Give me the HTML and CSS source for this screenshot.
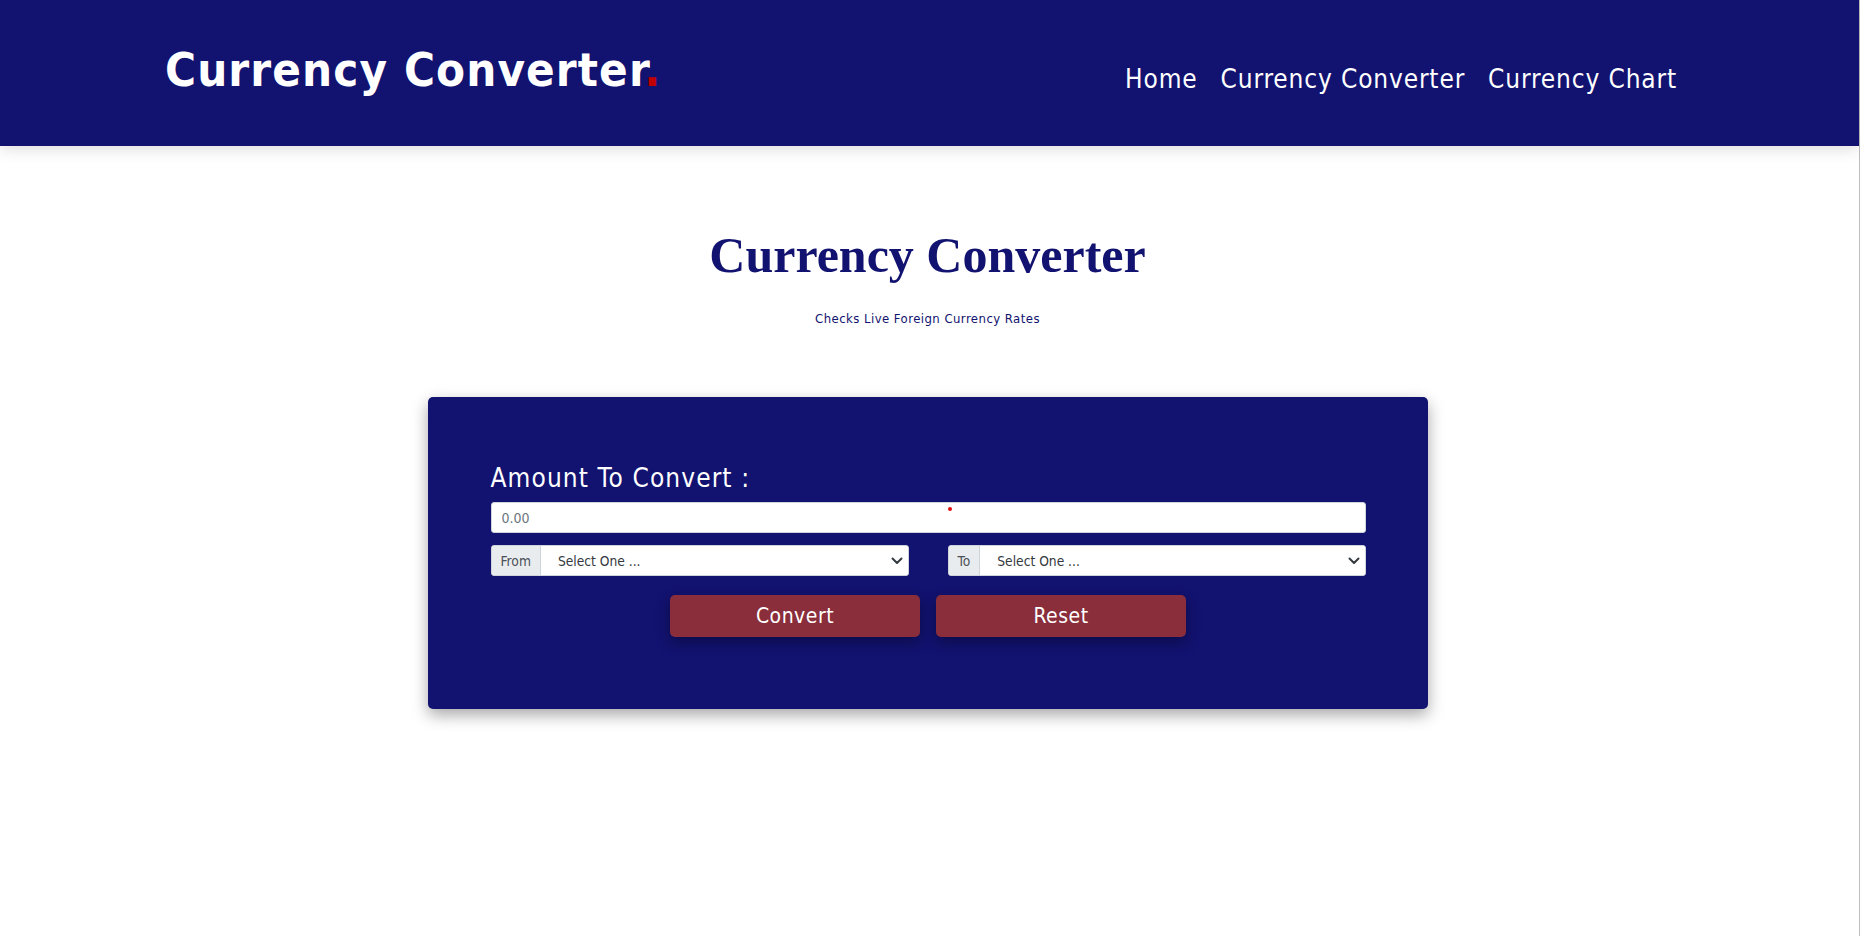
FILE: index.html
```html
<!DOCTYPE html>
<html lang="en">
<head>
<meta charset="utf-8">
<title>Currency Converter</title>
<link rel="stylesheet" href="styles.css">
</head>
<body>
<div class="page">
  <header class="site-header">
    <div class="brand">Currency Converter<span class="brand-dot">.</span></div>
    <nav class="nav">
      <a href="#" class="nav-link">Home</a>
      <a href="#" class="nav-link">Currency Converter</a>
      <a href="#" class="nav-link">Currency Chart</a>
    </nav>
  </header>

  <main class="main">
    <h1 class="title">Currency Converter</h1>
    <p class="subtitle">Checks Live Foreign Currency Rates</p>

    <section class="card">
      <label class="amount-label" for="amount">Amount To Convert :</label>
      <div class="amount-wrap">
        <input id="amount" class="amount-input" type="text" placeholder="0.00">
        <span class="red-dot"></span>
      </div>
      <div class="select-row">
        <div class="input-group">
          <span class="addon">From</span>
          <div class="select-wrap">
            <select class="select"><option>Select One ...</option></select>
            <svg class="chevron" width="12" height="8" viewBox="0 0 12 8"><path d="M1.5 1.5 L6 6 L10.5 1.5" fill="none" stroke="#343a40" stroke-width="2" stroke-linecap="round" stroke-linejoin="round"/></svg>
          </div>
        </div>
        <div class="input-group">
          <span class="addon">To</span>
          <div class="select-wrap">
            <select class="select"><option>Select One ...</option></select>
            <svg class="chevron" width="12" height="8" viewBox="0 0 12 8"><path d="M1.5 1.5 L6 6 L10.5 1.5" fill="none" stroke="#343a40" stroke-width="2" stroke-linecap="round" stroke-linejoin="round"/></svg>
          </div>
        </div>
      </div>
      <div class="button-row">
        <button class="btn" type="button">Convert</button>
        <button class="btn" type="button">Reset</button>
      </div>
    </section>
  </main>
</div>
</body>
</html>
```

FILE: styles.css
```css
* { box-sizing: border-box; }

html, body {
  margin: 0;
  padding: 0;
  background: #ffffff;
}

body {
  font-family: "DejaVu Sans Condensed", "DejaVu Sans", sans-serif;
  overflow: hidden;
}

.page {
  width: 1860px;
  min-height: 936px;
  border-right: 1px solid #bdbdbd;
}

.site-header {
  height: 146px;
  background: #121270;
  display: flex;
  justify-content: space-between;
  align-items: flex-start;
  padding: 0 182px 0 165px;
  box-shadow: 0 4px 14px rgba(0, 0, 0, 0.12);
  position: relative;
}

.brand {
  color: #ffffff;
  font-weight: bold;
  font-size: 47px;
  letter-spacing: 1.1px;
  line-height: 56px;
  padding-top: 42px;
}

.brand-dot { color: #c00000; }

.nav {
  display: flex;
  gap: 23px;
  padding-top: 63px;
}

.nav-link {
  color: #ffffff;
  text-decoration: none;
  font-size: 26px;
  letter-spacing: 0.85px;
  line-height: 32px;
}

.main {
  display: flex;
  flex-direction: column;
  align-items: center;
  padding-right: 4px;
}

.title {
  margin: 79px 0 0;
  font-family: "Liberation Serif", "Times New Roman", serif;
  font-weight: bold;
  font-size: 50px;
  line-height: 60px;
  color: #121270;
}

.subtitle {
  margin: 26px 0 0;
  font-size: 13px;
  letter-spacing: 0.45px;
  line-height: 16px;
  color: #121270;
}

.card {
  margin-top: 70px;
  width: 1000px;
  height: 312px;
  background: #121270;
  border-radius: 5px;
  padding: 64px 62px 0 63px;
  box-shadow: 0 6px 16px rgba(0, 0, 0, 0.35);
  display: flex;
  flex-direction: column;
}

.amount-label {
  color: #ffffff;
  font-size: 26px;
  letter-spacing: 1.1px;
  line-height: 32px;
  margin-top: 1px;
  margin-bottom: 8px;
}

.amount-wrap {
  position: relative;
}

.amount-input {
  width: 100%;
  height: 31px;
  border: 1px solid #ced4da;
  border-radius: 3px;
  padding: 0 10px;
  font-family: inherit;
  font-size: 14px;
  color: #495057;
  background: #ffffff;
  outline: none;
}

.amount-input::placeholder { color: #6c757d; }

.red-dot {
  position: absolute;
  left: 457px;
  top: 5px;
  width: 4px;
  height: 4px;
  border-radius: 50%;
  background: #e01010;
}

.select-row {
  margin-top: 12px;
  display: grid;
  grid-template-columns: 1fr 1fr;
  gap: 39px;
}

.input-group {
  display: flex;
  height: 31px;
  border: 1px solid #ced4da;
  border-radius: 3px;
  background: #ffffff;
  overflow: hidden;
}

.addon {
  display: flex;
  align-items: center;
  padding: 0 9px;
  background: #e9ecef;
  border-right: 1px solid #ced4da;
  color: #495057;
  font-size: 13.7px;
}

.select-wrap {
  position: relative;
  flex: 1;
}

.select {
  appearance: none;
  -webkit-appearance: none;
  width: 100%;
  height: 100%;
  border: 0;
  background: #ffffff;
  padding: 0 30px 0 17px;
  font-family: inherit;
  font-size: 13.7px;
  color: #343a40;
  outline: none;
}

.chevron {
  position: absolute;
  right: 5px;
  top: 11px;
  pointer-events: none;
}

.button-row {
  margin-top: 19px;
  display: flex;
  justify-content: center;
  gap: 16px;
}

.btn {
  width: 250px;
  height: 42px;
  border: 0;
  border-radius: 5px;
  background: #892e3a;
  color: #ffffff;
  font-family: inherit;
  font-size: 21px;
  letter-spacing: 0.5px;
  box-shadow: 0 5px 14px rgba(0, 0, 0, 0.35);
}
```
